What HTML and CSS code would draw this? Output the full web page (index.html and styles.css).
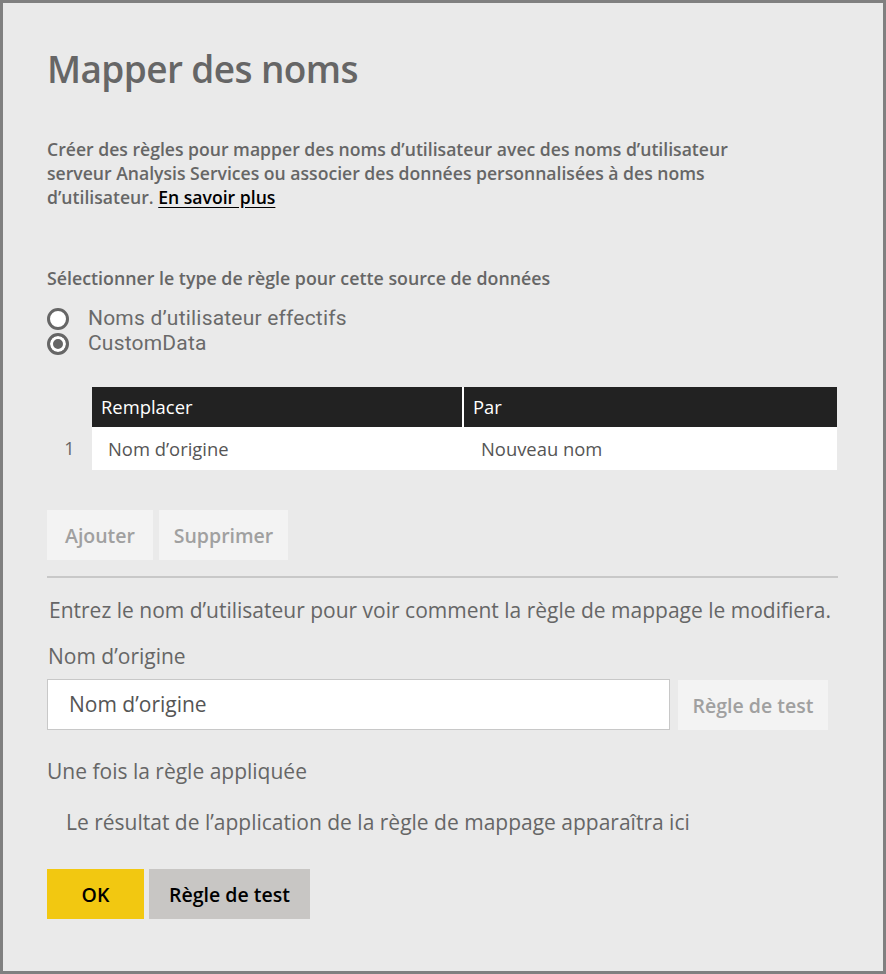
FILE: index.html
```html
<!DOCTYPE html>
<html lang="fr">
<head>
<meta charset="utf-8">
<title>Mapper des noms</title>
<link rel="stylesheet" href="styles.css">
</head>
<body>
<div class="dialog">
  <h1 class="title">Mapper des noms</h1>
  <p class="desc">Créer des règles pour mapper des noms d’utilisateur avec des noms d’utilisateur<br>serveur Analysis Services ou associer des données personnalisées à des noms<br>d’utilisateur. <a class="link" href="#">En savoir plus</a></p>
  <div class="section-label">Sélectionner le type de règle pour cette source de données</div>
  <div class="radios">
    <label class="radio"><span class="dot"></span><span class="radio-text">Noms d’utilisateur effectifs</span></label>
    <label class="radio"><span class="dot checked"></span><span class="radio-text">CustomData</span></label>
  </div>
  <div class="table">
    <div class="row head">
      <div class="num"></div>
      <div class="cell c1">Remplacer</div>
      <div class="cell c2">Par</div>
    </div>
    <div class="row body">
      <div class="num">1</div>
      <div class="cell c1">Nom d’origine</div>
      <div class="cell c2">Nouveau nom</div>
    </div>
  </div>
  <div class="actions">
    <button class="btn disabled">Ajouter</button>
    <button class="btn disabled">Supprimer</button>
  </div>
  <hr class="sep">
  <div class="text hint">Entrez le nom d’utilisateur pour voir comment la règle de mappage le modifiera.</div>
  <div class="text field-label">Nom d’origine</div>
  <div class="test-row">
    <div class="input">Nom d’origine</div>
    <button class="btn disabled test">Règle de test</button>
  </div>
  <div class="text after">Une fois la règle appliquée</div>
  <div class="text result">Le résultat de l’application de la règle de mappage apparaîtra ici</div>
  <div class="footer">
    <button class="btn primary">OK</button>
    <button class="btn secondary">Règle de test</button>
  </div>
</div>
</body>
</html>
```
FILE: styles.css
```css
* { box-sizing: border-box; }
html, body { margin: 0; padding: 0; }
body { font-family: "Open Sans", "Noto Sans", sans-serif; color: #666; }
.dialog {
  width: 886px;
  height: 974px;
  border: 3px solid #808080;
  background: #eaeaea;
  padding: 0 0 0 44px;
}
.title {
  margin: 0;
  padding-top: 40px;
  font-size: 37px;
  line-height: 52px;
  font-weight: 600;
  color: #666;
  letter-spacing: -0.6px;
}
.desc {
  margin: 42px 0 0;
  font-size: 17.6px;
  line-height: 24px;
  font-weight: 600;
  color: #666;
}
.link { color: #000; text-decoration: underline; text-underline-offset: 3px; }
.section-label {
  margin-top: 57px;
  font-size: 17.8px;
  line-height: 24px;
  font-weight: 600;
}
.radios { margin-top: 16px; display: flex; flex-direction: column; }
.radio { display: flex; align-items: center; gap: 19px; height: 25px; color: #6a6a6a; }
.radio-text { font-family: Roboto, "Open Sans", sans-serif; font-size: 21px; line-height: 25px; letter-spacing: 0.2px; }
.dot {
  width: 22px; height: 22px; border-radius: 50%;
  border: 3.5px solid #666; background: #fff; flex: none;
}
.dot.checked { background: #666; box-shadow: inset 0 0 0 3px #fff; }
.table { margin-top: 31px; width: 790px; }
.row { display: flex; }
.num { width: 45px; flex: none; }
.row.head .cell { background: #222; color: #fff; height: 40px; line-height: 40px; font-size: 18.4px; padding-left: 9px; }
.row.head .c1 { border-right: 2px solid #fff; }
.row.body .num { font-size: 18px; line-height: 43px; text-align: center; color: #666; }
.row.body .cell { background: #fff; height: 43px; line-height: 43px; font-size: 18.4px; color: #555; }
.row.body .c1 { padding-left: 16px; }
.row.body .c2 { padding-left: 17px; }
.c1 { width: 372px; flex: none; }
.c2 { width: 373px; flex: none; }
.btn {
  font-family: inherit; border: none; font-weight: 600;
  height: 50px; padding: 0; font-size: 19.5px; text-align: center;
}
.btn.disabled { background: #f3f3f3; color: #a0a0a0; }
.actions { margin-top: 40px; display: flex; gap: 6px; }
.actions .btn:first-child { width: 106px; }
.actions .btn:last-child { width: 129px; }
.sep { margin: 16px 0 0; width: 791px; border: none; border-top: 2px solid #c8c8c8; height: 0; }
.text { font-size: 21px; line-height: 26px; }
.hint { margin-top: 19px; padding-left: 2px; }
.field-label { margin-top: 20px; padding-left: 1px; }
.test-row { margin-top: 10px; display: flex; gap: 8px; align-items: flex-start; }
.input {
  width: 623px; height: 51px; background: #fff; border: 1px solid #c8c8c8;
  font-size: 21px; line-height: 49px; padding-left: 21px; color: #555;
}
.btn.test { width: 150px; margin-top: 1px; }
.after { margin-top: 28px; }
.result { margin-top: 25px; padding-left: 19px; }
.footer { margin-top: 34px; display: flex; gap: 5px; }
.btn.primary { background: #f2c811; color: #000; width: 97px; }
.btn.secondary { background: #c8c6c4; color: #000; width: 161px; }
```
